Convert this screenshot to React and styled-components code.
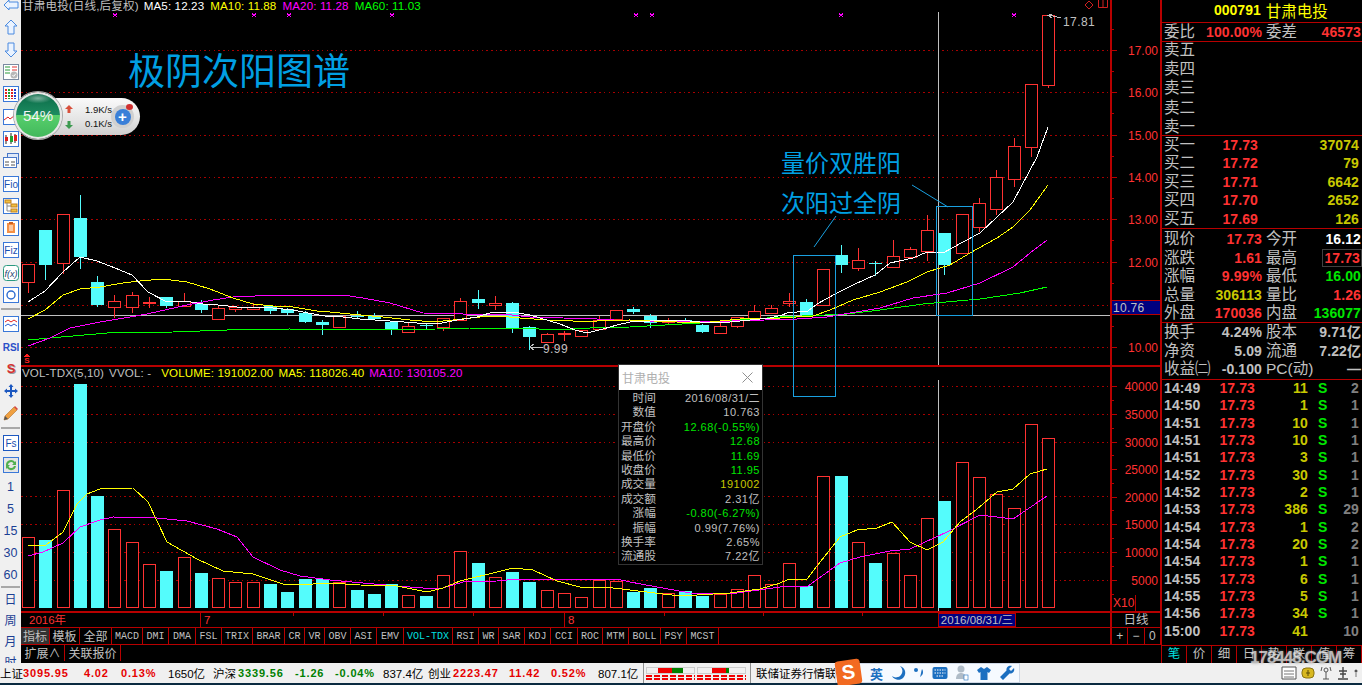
import React from "react";
import styled, { createGlobalStyle } from "styled-components";

const RED = "#ff3232";
const CYAN = "#54fcfc";
const LINE = "#b80000";
const GRAY = "#c0c0c0";
const OLIVE = "#c8c800";
const GREEN = "#00e600";
const CJK = '"Liberation Sans", "Noto Sans CJK SC", sans-serif';

//------candles: [cyan?, high, top, bottom, low]
const candles = [
  [0, 264, 264, 282, 293], [1, 230, 230, 265, 280], [0, 214, 214, 263, 274], [1, 195, 218, 257, 269],
  [1, 276, 282, 305, 307], [0, 295, 301, 307, 318], [0, 292, 295, 307, 313], [0, 297, 302, 302, 308],
  [1, 297, 297, 306, 308], [0, 293, 301, 306, 306], [1, 300, 304, 310, 313], [0, 306, 308, 319, 319],
  [0, 307, 307, 309, 312], [0, 303, 307, 309, 309], [1, 306, 306, 311, 314], [1, 308, 309, 313, 315],
  [1, 311, 313, 322, 323], [1, 320, 322, 325, 335], [0, 316, 316, 327, 327], [1, 311, 316, 317, 318],
  [1, 313, 316, 319, 319], [1, 322, 322, 330, 335], [0, 323, 326, 332, 333], [1, 323, 325, 325, 330],
  [0, 318, 318, 327, 331], [0, 298, 301, 320, 320], [1, 290, 299, 303, 309], [0, 296, 303, 305, 310],
  [1, 302, 303, 328, 333], [1, 326, 327, 337, 350], [0, 333, 334, 342, 342], [0, 331, 333, 334, 341],
  [0, 330, 330, 336, 336], [0, 316, 320, 329, 329], [0, 310, 310, 319, 319], [1, 307, 309, 312, 314],
  [1, 314, 316, 323, 328], [0, 318, 320, 322, 325], [1, 318, 320, 322, 324], [1, 324, 325, 332, 333],
  [0, 321, 326, 333, 334], [0, 317, 317, 326, 328], [0, 305, 311, 318, 318], [0, 305, 308, 313, 313],
  [0, 293, 301, 303, 307], [1, 299, 302, 315, 315], [0, 269, 269, 305, 305], [1, 245, 255, 265, 273],
  [0, 248, 260, 268, 271], [1, 261, 263, 263, 276], [0, 240, 256, 267, 267], [0, 247, 249, 257, 257],
  [0, 215, 230, 251, 261], [1, 233, 233, 265, 275], [0, 214, 214, 253, 253], [0, 198, 203, 227, 232],
  [0, 170, 177, 209, 215], [0, 138, 146, 179, 187], [0, 84, 84, 147, 157], [0, 15, 15, 85, 88],
];

// top of each volume bar, the baseline is 608.7
const volumes = [
  538, 541, 491, 385, 497, 530, 543, 565, 572, 558, 574, 579, 583, 583, 585, 593, 580, 580, 583, 591,
  595, 585, 596, 597, 576, 552, 564, 578, 573, 583, 591, 594, 598, 581, 582, 593, 589, 594, 592, 597,
  595, 590, 576, 585, 564, 587, 477, 477, 543, 564, 554, 576, 519, 502, 463, 478, 495, 509, 425, 439,
];

const ma5 = "28,302 45,291 63,272 80,257 97,261 115,268 132,275 148,292 167,302 185,301 203,304 218,305 237,307 253,307 273,308 293,310 308,313 325,316 343,317 360,319 390,321 417,323 437,324 457,320 477,317 493,312 513,312 530,315 540,318 560,324 575,330 587,333 603,329 617,325 630,322 650,321 670,320 690,321 710,323 730,322 750,320 770,318 782,315 787,313 808,311 817,304 837,293 853,285 875,275 890,263 913,258 927,252 943,253 963,242 980,233 997,217 1013,202 1037,157 1048,127";
const ma10 = "28,319 45,310 63,295 80,289 100,287 123,283 140,281 163,279 187,282 210,289 233,298 253,304 273,306 293,307 317,311 330,312 350,314 383,317 410,320 433,322 453,320 480,317 497,316 520,318 547,320 573,321 597,321 630,320 700,323 750,318 780,318 813,316 830,310 853,300 880,292 907,282 927,272 950,265 970,253 997,238 1013,227 1030,210 1048,185";
const ma20 = "28,346 50,338 70,328 100,322 130,317 147,314 187,305 213,300 233,297 277,295 343,295 363,298 390,303 423,313 463,314 503,314 530,317 563,318 597,319 630,321 700,322 797,319 827,317 850,313 880,308 913,298 947,293 980,283 1013,267 1030,253 1047,240";
const ma60 = "28,340 50,338 73,336 107,333 173,332 227,330 290,329 297,330 437,329 470,328 520,328 557,330 590,328 630,327 700,323 780,317 847,314 880,310 923,304 980,299 1020,293 1047,287";
const volMa5 = "28,546 37,546 46,546 63,533 77,505 87,495 100,490 133,489 148,503 167,543 197,560 223,572 253,575 283,585 313,585 330,584 360,586 397,587 427,593 443,589 460,582 497,573 513,569 533,571 557,582 580,588 613,589 630,591 680,597 730,594 760,590 780,584 787,581 807,580 817,567 840,538 857,531 877,529 892,523 910,543 927,551 943,543 960,523 977,510 997,493 1013,490 1030,475 1047,470";
const volMa10 = "28,557 43,553 63,544 80,528 100,521 113,518 157,519 187,522 217,530 237,538 253,558 280,571 300,577 330,581 363,584 397,587 423,589 443,589 463,583 497,582 517,580 590,580 617,580 630,583 690,594 730,595 780,588 808,587 840,564 860,558 890,552 910,550 947,533 980,516 1013,520 1047,497";

const priceGrid = [50, 92, 135, 177, 219, 262, 305, 347];
const volGrid = [387, 415, 443, 497, 525, 553, 581];
const priceLabels = [[50, "17.00"], [92, "16.00"], [135, "15.00"], [177, "14.00"], [219, "13.00"], [262, "12.00"], [347, "10.00"]];
const volLabels = [[387, "40000"], [415, "35000"], [443, "30000"], [470, "25000"], [498, "20000"], [525, "15000"], [553, "10000"], [581, "5000"]];
const stars = [115, 254, 289, 392, 636, 652, 841, 1014];

const tabs = [
  ["指标", 29, 1], ["模板", 30], ["全部", 32], ["MACD", 31], ["DMI", 26], ["DMA", 27], ["FSL", 26], ["TRIX", 31], ["BRAR", 32],
  ["CR", 20], ["VR", 20], ["OBV", 26], ["ASI", 26], ["EMV", 27], ["VOL-TDX", 49, 2], ["RSI", 26], ["WR", 20], ["SAR", 26],
  ["KDJ", 26], ["CCI", 27], ["ROC", 25], ["MTM", 26], ["BOLL", 32], ["PSY", 26], ["MCST", 32],
];

const asks = ["卖五", "卖四", "卖三", "卖二", "卖一"];
const bids = [
  ["买一", "17.73", "37074"], ["买二", "17.72", "79"], ["买三", "17.71", "6642"], ["买四", "17.70", "2652"], ["买五", "17.69", "126"],
];
const quote = [
  ["现价", "17.73", RED, "今开", "16.12", "#fff"],
  ["涨跌", "1.61", RED, "最高", "17.73", RED, true],
  ["涨幅", "9.99%", RED, "最低", "16.00", GREEN],
  ["总量", "306113", OLIVE, "量比", "1.26", RED],
  ["外盘", "170036", RED, "内盘", "136077", GREEN],
];
const finance = [
  ["换手", "4.24%", "股本", "9.71亿"],
  ["净资", "5.09", "流通", "7.22亿"],
  ["收益㈡", "-0.100", "PC(动)", "—"],
];
const ticks = [
  ["14:49", "11", "2"], ["14:50", "1", "1"], ["14:51", "10", "1"], ["14:51", "10", "1"], ["14:51", "3", "1"],
  ["14:52", "30", "1"], ["14:52", "2", "1"], ["14:53", "386", "29"], ["14:54", "1", "2"], ["14:54", "20", "2"],
  ["14:54", "1", "1"], ["14:55", "6", "1"], ["14:55", "5", "1"], ["14:56", "34", "1"], ["15:00", "41", "10", true],
];
const popupRows = [
  ["时间", "2016/08/31/二", GRAY], ["数值", "10.763", GRAY], ["开盘价", "12.68(-0.55%)", GREEN], ["最高价", "12.68", GREEN],
  ["最低价", "11.69", GREEN], ["收盘价", "11.95", GREEN], ["成交量", "191002", OLIVE], ["成交额", "2.31亿", GRAY],
  ["涨幅", "-0.80(-6.27%)", GREEN], ["振幅", "0.99(7.76%)", GRAY], ["换手率", "2.65%", GRAY], ["流通股", "7.22亿", GRAY],
];
const market = [
  ["上证", "#000", 23, 0], ["3095.95", "#e60000", 61, 1], ["4.02", "#e60000", 37, 1], ["0.13%", "#e60000", 47, 1], ["1650亿", "#000", 45, 0],
  ["沪深", "#000", 25, 0], ["3339.56", "#008000", 57, 1], ["-1.26", "#008000", 40, 1], ["-0.04%", "#008000", 48, 1], ["837.4亿", "#000", 45, 0],
  ["创业", "#000", 25, 0], ["2223.47", "#e60000", 56, 1], ["11.42", "#e60000", 42, 1], ["0.52%", "#e60000", 47, 1], ["807.1亿", "#000", 45, 0],
];
const sideTabs = ["笔", "价", "细", "日", "势", "联", "值", "筹"];

const GlobalStyle = createGlobalStyle`
  html, body { margin: 0; padding: 0; background: #000; }
  * { box-sizing: border-box; }
`;

const Screen = styled.div`
  position: relative;
  width: 1362px;
  height: 685px;
  overflow: hidden;
  background: #000;
  font-family: ${CJK};
  display: flex;
  flex-direction: column;
`;
const Main = styled.div`
  display: flex;
  height: 663px;
`;

//----------left toolbar----------
const ToolBar = styled.div`
  width: 21px;
  height: 663px;
  overflow: hidden;
  background: #f0f0f0;
  display: flex;
  flex-direction: column;
  align-items: center;
`;
const Tool = styled.div`
  flex: none;
  width: 21px;
  height: ${(p) => p.$h || 22.3}px;
  margin-top: ${(p) => p.$mt || 0}px;
  display: flex;
  align-items: center;
  justify-content: center;
  color: #1b3f94;
  font-size: ${(p) => p.$fs || 12.5}px;
`;
const ToolSep = styled.div`
  flex: none;
  width: 19px;
  height: 2px;
  margin: ${(p) => p.$m || "2px 0 3px"};
  background: #a8a8a8;
`;

const IconSvg = ({ children }) => (
  <svg width="16" height="16" viewBox="0 0 16 16">{children}</svg>
);
const Frame = ({ stroke = "#3a78d8", fill = "#fff" }) => (
  <rect x="0.5" y="0.5" width="15" height="15" fill={fill} stroke={stroke} />
);
const Label = ({ t, size = 9, x = 8, y = 12, weight = 400, color = "#1a4fb0", italic }) => (
  <text x={x} y={y} textAnchor="middle" fontSize={size} fontWeight={weight} fill={color} fontFamily="Liberation Sans, sans-serif" fontStyle={italic ? "italic" : "normal"}>
    {t}
  </text>
);

const icons = {
  back: <path d="M1 8 6 3v2h9v6H6v2z" fill="#eaf3ff" stroke="#4a8ae0" />,
  up: <path d="M8 1 14 7h-3v8H5V7H2z" fill="#eaf3ff" stroke="#4a8ae0" />,
  down: <path d="M8 15 2 9h3V1h6v8h3z" fill="#eaf3ff" stroke="#4a8ae0" />,
  report: (
    <>
      <Frame stroke="#7a8aa0" />
      <path d="M2 3h5M2 6h5M2 9h5" stroke="#2a9a3a" />
      <path d="M9 3h5M9 6h5" stroke="#e03030" />
      <circle cx="11" cy="11" r="3.5" fill="#b8b8b8" />
      <path d="m9.5 11 1.2 1.4 2-2.6" stroke="#fff" fill="none" />
    </>
  ),
  grid: (
    <>
      <Frame />
      <path d="M3 3v10M9 3v10" stroke="#e02020" strokeWidth="2" strokeDasharray="2 1" />
      <path d="M6 3v10" stroke="#20a030" strokeWidth="2" strokeDasharray="2 1" />
      <path d="M12 3v10" stroke="#2040d0" strokeWidth="2" strokeDasharray="2 1" />
    </>
  ),
  line: (
    <>
      <Frame />
      <path d="m1 11 4-3 2 2 4-3 4-2" stroke="#e02020" fill="none" />
    </>
  ),
  candle: (
    <>
      <Frame />
      <path d="M3 4v9M8 2v11M12 3v9" stroke="#222" />
      <rect x="2" y="6" width="3" height="4" fill="#e02020" />
      <rect x="7" y="5" width="3" height="6" fill="#20a030" />
      <rect x="11" y="4" width="3" height="6" fill="#e02020" />
    </>
  ),
  windows: (
    <>
      <rect x="4.5" y="0.5" width="11" height="10" fill="#dfe9f8" stroke="#4a78c8" />
      <rect x="0.5" y="4.5" width="13" height="10" fill="#fff" stroke="#4a78c8" />
      <path d="M2 9h4M8 9h4M2 12h4M8 12h4" stroke="#555" />
    </>
  ),
  fio: (
    <>
      <Frame />
      <Label t="Fio" size={10} />
    </>
  ),
  tree: (
    <>
      <Frame />
      <rect x="2" y="2" width="6" height="3" fill="#f0c040" stroke="#c08020" />
      <rect x="8" y="6" width="6" height="3" fill="#f0c040" stroke="#c08020" />
      <rect x="8" y="11" width="6" height="3" fill="#f0c040" stroke="#c08020" />
      <path d="M4 5v8h4M4 8h4" stroke="#888" fill="none" />
    </>
  ),
  note: (
    <>
      <Frame />
      <rect x="4" y="3" width="8" height="10" fill="#f59045" />
      <path d="M6 6h4M6 8h4M6 10h4" stroke="#fff" />
      <rect x="6" y="2" width="4" height="2" fill="#d06020" />
    </>
  ),
  fiz: (
    <>
      <Frame />
      <Label t="Fiz" size={10} />
    </>
  ),
  fx: (
    <>
      <rect x="0.5" y="0.5" width="15" height="15" rx="3" fill="#fff" stroke="#2a9a80" />
      <Label t="f(x)" size={9} y={11.5} color="#1a3f70" italic />
    </>
  ),
  ring: (
    <>
      <Frame />
      <circle cx="8" cy="8" r="4" fill="none" stroke="#2a6ad0" strokeWidth="1.4" />
    </>
  ),
  wave: (
    <>
      <Frame />
      <path d="m2 6 3-2 3 2 3-2 3 2" stroke="#e02020" fill="none" />
      <path d="m2 10 3-2 3 2 3-2 3 2" stroke="#2a5ad0" fill="none" />
    </>
  ),
  rsi: <Label t="RSI" size={10} weight={700} color="#2a4fc8" />,
  sar: (
    <>
      <Label t="S" size={13} x={9} y={13} weight={700} color="#999" />
      <Label t="S" size={13} x={8} y={12} weight={700} color="#d83030" />
    </>
  ),
  move: (
    <path d="M8 1 10.5 4H9v3h3V5.5L15 8l-3 2.5V9H9v3h1.5L8 15l-2.5-3H7V9H4v1.5L1 8l3-2.5V7h3V4H5.5z" fill="#1c58c0" />
  ),
  pencil: (
    <>
      <path d="M2 11 11 2l3 3-9 9-4 1z" fill="#f0a040" stroke="#b07030" strokeWidth="0.6" />
      <path d="m11 2 3 3 1-1-3-3z" fill="#d84040" />
      <path d="m1 15 1-4 3 3z" fill="#555" />
    </>
  ),
  fs: (
    <>
      <Frame stroke="#1c58c0" />
      <Label t="Fs" size={10} />
    </>
  ),
  refresh: (
    <>
      <Frame fill="#e6e6e6" />
      <path d="M3 8a5 5 0 0 1 9-3l1-1v4H9l1.5-1.5A3 3 0 0 0 5 8zM13 9a5 5 0 0 1-9 2l-1 1V8h4L5.5 9.5A3 3 0 0 0 11 9z" fill="#50b050" />
    </>
  ),
};
const firstTools = ["back", "up", "down", "report", "grid", "line", "candle", "windows", "fio", "tree", "note", "fiz", "fx", "ring"];
const secondTools = ["wave", "rsi", "sar", "move", "pencil"];
const thirdTools = ["fs", "refresh"];
const cycles = ["1", "5", "15", "30", "60"];
const periods = ["日", "周", "月", "时"];

function SideTools() {
  return (
    <ToolBar>
      {firstTools.map((k, i) => (
        <Tool key={k} $mt={i === 0 ? -6 : 0}><IconSvg>{icons[k]}</IconSvg></Tool>
      ))}
      <ToolSep />
      {secondTools.map((k) => (
        <Tool key={k}><IconSvg>{icons[k]}</IconSvg></Tool>
      ))}
      <ToolSep />
      {thirdTools.map((k) => (
        <Tool key={k}><IconSvg>{icons[k]}</IconSvg></Tool>
      ))}
      {cycles.map((k) => (
        <Tool key={k} $h={22}>{k}</Tool>
      ))}
      <ToolSep $m="0" />
      {periods.map((k) => (
        <Tool key={k} $h={21} $fs={12}>{k}</Tool>
      ))}
    </ToolBar>
  );
}

//----------chart column----------
const Center = styled.div`
  width: 1140px;
  display: flex;
  flex-direction: column;
`;
const Pane = styled.div`
  display: flex;
  height: ${(p) => p.$h}px;
  border-bottom: 2px solid ${LINE};
`;
const PlotCol = styled.div`
  width: 1089px;
  display: flex;
  flex-direction: column;
  svg { display: block; }
`;
const AxisCol = styled.div`
  width: 51px;
  svg { display: block; }
`;
const LegendRow = styled.div`
  flex: none;
  height: ${(p) => p.$h}px;
  padding-left: 1px;
  display: flex;
  align-items: center;
  gap: ${(p) => p.$gap}px;
  white-space: nowrap;
  font-size: ${(p) => p.$fs}px;
  line-height: 12px;
  letter-spacing: 0.12px;
`;
const LegendItem = styled.span`
  color: ${(p) => p.$c};
  margin-right: ${(p) => p.$mr || 0}px;
`;

const Dotted = ({ y }) => (
  <line x1="21" x2="1110" y1={y} y2={y} stroke="#a80000" strokeDasharray="1.5 3.2" />
);

const cx = (n) => Math.round(22 + 17.29 * n);

function Candle({ n, data }) {
  const [cyan, hi, top, bottom, low] = data;
  const x = cx(n);
  const color = cyan ? CYAN : RED;
  const mid = x + 6.5;
  return (
    <g>
      <line x1={mid} x2={mid} y1={hi} y2={low} stroke={color} />
      {cyan ? (
        <rect x={x} y={top} width="13" height={Math.max(bottom - top, 1)} fill={color} />
      ) : (
        <rect x={x + 0.5} y={top + 0.5} width="12" height={Math.max(bottom - top, 1)} fill="#000" stroke={color} />
      )}
      {top === bottom && <line x1={x} x2={x + 13} y1={top} y2={top} stroke={color} />}
    </g>
  );
}

const MaLine = ({ points, color }) => (
  <polyline points={points} fill="none" stroke={color} strokeWidth="1" />
);

function PriceChart() {
  return (
    <svg width="1089" height="353" viewBox="21 12 1089 353" shapeRendering="crispEdges">
      {priceGrid.map((y) => <Dotted key={y} y={y} />)}
      <line x1="21" x2="1110" y1="315.5" y2="315.5" stroke={GRAY} />
      <line x1="938.5" x2="938.5" y1="11" y2="366" stroke={GRAY} />
      {candles.map((c, i) => <Candle key={i} n={i} data={c} />)}
      <MaLine points={ma60} color="#00ff00" />
      <MaLine points={ma20} color="#ff00ff" />
      <MaLine points={ma10} color="#ffff00" />
      <MaLine points={ma5} color="#ffffff" />
      {stars.map((x) => (
        <path key={x} d={`M${x - 2} 13.5l4 3.5m0 -3.5l-4 3.5`} stroke="#ff00ff" />
      ))}
      <polyline points="1049,15 1061,18" stroke={GRAY} fill="none" />
      <polyline points="1052,14 1048,15.5 1052,18" stroke={GRAY} fill="none" />
      <text x="1063" y="26" fontSize="12" letterSpacing="0.4" fill={GRAY} fontFamily="Liberation Sans">17.81</text>
      <polyline points="531,347 543,347" stroke={GRAY} fill="none" />
      <polyline points="534,344 530,347 534,350" stroke={GRAY} fill="none" />
      <text x="543" y="353" fontSize="12" letterSpacing="0.4" fill={GRAY} fontFamily="Liberation Sans">9.99</text>
      <polygon points="27,353 24,357 30,357" fill="#ff2020" />
      <text x="27" y="363" fontSize="8" fontWeight="700" textAnchor="middle" fill="#ff2020" fontFamily="Liberation Sans">S</text>
    </svg>
  );
}

function VolumeChart() {
  return (
    <svg width="1089" height="232" viewBox="21 380 1089 232" shapeRendering="crispEdges">
      {volGrid.map((y) => <Dotted key={y} y={y} />)}
      <line x1="938.5" x2="938.5" y1="381" y2="612" stroke={GRAY} />
      {volumes.map((top, i) => {
        const x = cx(i);
        return candles[i][0] ? (
          <rect key={i} x={x} y={top} width="13" height={609 - top} fill={CYAN} />
        ) : (
          <rect key={i} x={x + 0.5} y={top + 0.5} width="12" height={608 - top} fill="#000" stroke={RED} />
        );
      })}
      <MaLine points={volMa10} color="#ff00ff" />
      <MaLine points={volMa5} color="#ffff00" />
    </svg>
  );
}

// axis sits in page pixels minus the column offset
function Axis({ height, from, labels, minors, children }) {
  return (
    <svg width="51" height={height} viewBox={`1110 ${from} 51 ${height}`} shapeRendering="crispEdges">
      <rect x="1110" y={from} width="2" height={height} fill={LINE} />
      <rect x="1160" y={from} width="1" height={height} fill={LINE} />
      {labels.map(([y]) => (
        <line key={y} x1="1110" x2="1117" y1={y + 0.5} y2={y + 0.5} stroke={LINE} />
      ))}
      {minors.map((y) => (
        <line key={y} x1="1110" x2="1114" y1={y + 0.5} y2={y + 0.5} stroke={LINE} />
      ))}
      {labels.map(([y, t]) => (
        <text key={t} x="1158" y={y + 4.5} textAnchor="end" fontSize="12" fill={RED} fontFamily="Liberation Sans">{t}</text>
      ))}
      {children}
    </svg>
  );
}

function PriceAxis() {
  return (
    <Axis
      height={365}
      from={0}
      labels={priceLabels}
      minors={[29, 71, 113, 156, 198, 240, 283, 305, 326]}
    >
      <rect x="1112" y="300" width="48" height="15" fill="#000080" />
      <line x1="1112" x2="1160" y1="300" y2="300" stroke={LINE} />
      <line x1="1112" x2="1160" y1="314.5" y2="314.5" stroke={LINE} />
      <text x="1113" y="312" fontSize="12" letterSpacing="0.3" fill={GRAY} fontFamily="Liberation Sans">10.76</text>
    </Axis>
  );
}

const DateBar = styled.div`
  height: 15px;
  display: flex;
  border-bottom: 1px solid ${LINE};
  font-size: 11.5px;
  line-height: 14px;
  color: ${RED};
`;
const DateCell = styled.div`
  position: relative;
  flex: none;
  width: ${(p) => p.$w}px;
  padding-left: ${(p) => p.$pl || 3}px;
  border-left: 1px solid ${(p) => (p.$first ? "transparent" : LINE)};
`;
const DateTick = styled.i`
  position: absolute;
  top: 0;
  left: ${(p) => p.$x}px;
  width: 1px;
  height: 3px;
  background: ${LINE};
`;
const DateNow = styled.div`
  flex: none;
  width: 78px;
  border: 1px solid ${LINE};
  background: #000080;
  color: ${GRAY};
  font-size: 11.5px;
  line-height: 13px;
  text-align: center;
  white-space: nowrap;
`;
const CornerCell = styled.div`
  flex: none;
  width: 51px;
  margin-left: auto;
  border-left: 2px solid ${LINE};
  border-right: 1px solid ${LINE};
  text-align: center;
  color: ${GRAY};
  font-size: 12.5px;
`;
const TabRow = styled.div`
  height: 17px;
  display: flex;
  border-bottom: 1px solid ${LINE};
`;
const Tab = styled.div`
  flex: none;
  width: ${(p) => p.$w}px;
  border-right: 1px solid ${LINE};
  display: flex;
  align-items: center;
  justify-content: center;
  white-space: nowrap;
  font-family: "Liberation Mono", "Noto Sans CJK SC", monospace;
  font-size: ${(p) => (p.$cjk ? 12 : 10)}px;
  color: ${(p) => (p.$on === 2 ? "#00e0e0" : GRAY)};
  background: ${(p) => (p.$on === 1 ? "#333" : "transparent")};
`;
const MiniKey = styled.div`
  flex: 1;
  display: flex;
  align-items: center;
  justify-content: center;
  border-right: 1px solid ${LINE};
  color: ${GRAY};
  font-size: 12px;
`;
const MiniKeys = styled.div`
  flex: none;
  width: 51px;
  margin-left: auto;
  display: flex;
  border-left: 2px solid ${LINE};
`;
const SubRow = styled.div`
  height: 16px;
  display: flex;
`;

//----------right panel----------
const Panel = styled.div`
  width: 201px;
  display: flex;
  flex-direction: column;
  border-left: 1px solid ${LINE};
`;
const PanelBlock = styled.div`
  flex: none;
  height: ${(p) => p.$h}px;
  padding: ${(p) => p.$pt || 0}px 2px 0 2px;
  border-bottom: 1px solid ${LINE};
`;
const Title = styled.div`
  height: 20px;
  display: flex;
  align-items: center;
  padding-left: 50px;
  gap: 5px;
  color: #ffff00;
`;
const TitleCode = styled.span`
  font-size: 14px;
  font-weight: 700;
`;
const TitleName = styled.span`
  font-size: 15.5px;
`;
const Row = styled.div`
  display: grid;
  grid-template-columns: 98px 95px;
  column-gap: 4px;
  height: 18.5px;
  line-height: 18.5px;
`;
const AskList = styled.div`
  margin-top: -2px;
`;
const AskRow = styled.div`
  height: 19.2px;
  line-height: 19.2px;
`;
const Cell = styled.div`
  display: flex;
  justify-content: space-between;
  white-space: nowrap;
`;
const Cap = styled.span`
  color: ${GRAY};
  font-size: 15.5px;
`;
const Num = styled.span`
  position: relative;
  color: ${(p) => p.$c || GRAY};
  font-size: 14px;
  font-weight: 700;
  letter-spacing: 0.1px;
`;
const Boxed = styled.span`
  outline: 1px solid #404040;
  outline-offset: 0;
  padding: 0 1px;
`;
const BidRow = styled.div`
  display: grid;
  grid-template-columns: 40px 54px 1fr;
  height: 18.4px;
  line-height: 18.4px;
  padding-right: 1px;
  white-space: nowrap;
  & > :not(:first-child) { text-align: right; }
`;
const TickRow = styled.div`
  display: grid;
  grid-template-columns: 36px 55px 53px 20px 1fr;
  height: 17.33px;
  line-height: 17.33px;
  padding-right: 1px;
  white-space: nowrap;
  & > :nth-child(2), & > :nth-child(3), & > :last-child { text-align: right; }
  & > :nth-child(4) { padding-left: 10px; }
`;
const SideTabs = styled.div`
  height: 17px;
  display: flex;
`;
const SideTab = styled.div`
  flex: none;
  width: 25px;
  border-right: 1px solid ${LINE};
  text-align: center;
  line-height: 16px;
  font-size: 12.5px;
  color: ${(p) => (p.$on ? "#00e0e0" : GRAY)};
`;
const Watermark = styled.div`
  position: absolute;
  left: 1250px;
  top: 648px;
  color: #e8e8e8;
  font-family: "Liberation Sans", sans-serif;
  font-size: 17px;
  font-weight: 700;
  letter-spacing: -1px;
  text-shadow: 0 0 3px #888;
  opacity: 0.8;
`;

//----------status bar----------
const StatusBar = styled.div`
  flex: none;
  height: 20px;
  background: #f0f0f0;
  display: flex;
  align-items: center;
  font-size: 11.5px;
  white-space: nowrap;
`;
const Stat = styled.span`
  flex: none;
  width: ${(p) => p.$w}px;
  color: ${(p) => p.$c};
  font-weight: ${(p) => (p.$bold ? 700 : 400)};
  letter-spacing: ${(p) => (p.$bold ? 0.85 : 0)}px;
  font-size: ${(p) => (p.$bold ? 11 : 11.5)}px;
`;
const VDivider = styled.i`
  flex: none;
  width: 1px;
  height: 20px;
  background: #909090;
  margin: ${(p) => p.$m};
`;
const Breadth = styled.div`
  flex: none;
  width: 49px;
  margin-right: 2px;
  display: flex;
  flex-direction: column;
  gap: 1px;
`;
const BreadthTop = styled.div`
  display: flex;
  height: 7px;
  border: 1px solid #ccc;
`;
const BreadthCell = styled.i`
  flex: ${(p) => p.$f || 1};
  background: ${(p) => p.$c || "transparent"};
`;
const Dashes = styled.div`
  height: 2px;
  background: repeating-linear-gradient(90deg, #f00000 0 6px, transparent 6px 8px);
`;
const TrayIcons = styled.div`
  margin-left: auto;
  padding-right: 3px;
  display: flex;
  align-items: center;
  gap: 4px;
`;
const BottomStrip = styled.div`
  flex: none;
  height: 2px;
  background: #0a2a40;
`;

//----------things lying over the chart----------
const Headline = styled.div`
  position: absolute;
  left: ${(p) => p.$x}px;
  top: ${(p) => p.$y}px;
  font-family: "Noto Sans CJK SC", sans-serif;
  font-size: ${(p) => p.$fs}px;
  line-height: 1;
  color: #009fe3;
  white-space: nowrap;
`;
const Notes = styled.svg`
  position: absolute;
  left: 0;
  top: 0;
  pointer-events: none;
`;
const Corner = styled.svg`
  position: absolute;
  left: 1082px;
  top: 0;
`;

const Speed = styled.div`
  position: absolute;
  left: 38px;
  top: 98px;
  width: 102px;
  height: 37px;
  border-radius: 0 19px 19px 0;
  background: linear-gradient(#fafafa, #e4e4e4 60%, #cfcfcf);
  display: flex;
  align-items: center;
  padding-left: 27px;
`;
const SpeedBall = styled.div`
  position: absolute;
  left: 14px;
  top: 92px;
  width: 48px;
  height: 47px;
  border-radius: 50%;
  border: 2px solid #e8e8e8;
  box-shadow: 0 0 0 1px #aaa;
  background:
    radial-gradient(ellipse 14px 5px at 50% 10%, rgba(255, 255, 255, 0.45), transparent),
    linear-gradient(#0b6a48 0%, #1d8c60 48%, #58d06c 48%, #42b85c 100%);
  color: #f4f4f4;
  font-size: 15px;
  text-align: center;
  line-height: 44px;
`;
const SpeedRates = styled.div`
  margin-left: 12px;
  font-size: 9.5px;
  line-height: 14px;
  color: #111;
`;
const SpeedArrows = styled.svg`
  flex: none;
`;
const PlusBall = styled.div`
  position: absolute;
  right: 6px;
  top: 7px;
  width: 23px;
  height: 23px;
  border-radius: 50%;
  background: #d0d0d0;
  display: flex;
  align-items: center;
  justify-content: center;
  &::before {
    content: "+";
    width: 16px;
    height: 16px;
    border-radius: 50%;
    background: #3a7fd8;
    color: #fff;
    font-size: 15px;
    font-weight: 700;
    line-height: 15px;
    text-align: center;
  }
  &::after {
    content: "";
    position: absolute;
    right: 1px;
    top: -1px;
    width: 7px;
    height: 6px;
    border-radius: 50%;
    background: #d03030;
  }
`;

const Popup = styled.div`
  position: absolute;
  left: 618px;
  top: 364px;
  width: 145px;
  height: 201px;
  border: 1px solid #333;
  background: #000;
`;
const PopupHead = styled.div`
  height: 25px;
  background: #fff;
  color: #b0b0b0;
  font-size: 12px;
  padding: 0 9px 0 3px;
  display: flex;
  align-items: center;
  justify-content: space-between;
  svg { flex: none; }
`;
const PopupBody = styled.div`
  padding-top: 1px;
`;
const PopupRow = styled.div`
  display: grid;
  grid-template-columns: 37px 104px;
  height: 14.4px;
  line-height: 14.4px;
  white-space: nowrap;
  text-align: right;
  font-size: 11px;
  letter-spacing: 0.5px;
  color: ${(p) => p.$c};
  & > :first-child { color: ${GRAY}; font-size: 11.7px; letter-spacing: 0; }
`;

const ImeBar = styled.div`
  position: absolute;
  left: 835px;
  top: 663px;
  width: 185px;
  height: 20px;
  background: #f6faff;
  border: 1px solid #cfd8e6;
  display: flex;
  align-items: center;
  padding-left: 34px;
  gap: 7px;
  color: #1c6fc0;
  font-size: 13px;
  font-weight: 700;
  svg { flex: none; }
`;
const ImeLogo = styled.div`
  position: absolute;
  left: 0;
  top: -4px;
  width: 25px;
  height: 25px;
  border-radius: 3px;
  background: #f26a21;
  color: #fff;
  font-size: 20px;
  font-weight: 700;
  line-height: 25px;
  text-align: center;
  transform: rotate(-8deg);
`;

function App() {
  return (
    <Screen>
      <GlobalStyle />
      <Main>
        <SideTools />
        <Center>
          <Pane $h={367}>
            <PlotCol>
              <LegendRow $h={12} $fs={11.6} $gap={6}>
                <LegendItem $c={GRAY} $mr={-1}>甘肃电投(日线,后复权)</LegendItem>
                <LegendItem $c="#fff">MA5: 12.23</LegendItem>
                <LegendItem $c="#ffff00">MA10: 11.88</LegendItem>
                <LegendItem $c="#ff00ff">MA20: 11.28</LegendItem>
                <LegendItem $c="#00ff00">MA60: 11.03</LegendItem>
              </LegendRow>
              <PriceChart />
            </PlotCol>
            <AxisCol><PriceAxis /></AxisCol>
          </Pane>
          <Pane $h={246}>
            <PlotCol>
              <LegendRow $h={12} $fs={11.6} $gap={5}>
                <LegendItem $c={GRAY}>VOL-TDX(5,10)</LegendItem>
                <LegendItem $c={GRAY} $mr={5}>VVOL: -</LegendItem>
                <LegendItem $c="#ffff00">VOLUME: 191002.00</LegendItem>
                <LegendItem $c="#ffff00">MA5: 118026.40</LegendItem>
                <LegendItem $c="#ff00ff">MA10: 130105.20</LegendItem>
              </LegendRow>
              <VolumeChart />
            </PlotCol>
            <AxisCol>
              <Axis height={244} from={368} labels={volLabels} minors={[401, 429, 456, 484, 511, 539, 567, 595]}>
                <text x="1113" y="608" fontSize="12" fill={RED} fontFamily="Liberation Sans">X10</text>
                <line x1="1135.5" x2="1135.5" y1="596" y2="612" stroke={LINE} />
              </Axis>
            </AxisCol>
          </Pane>
          <DateBar>
            <DateCell $w={179} $pl={7} $first>2016年</DateCell>
            <DateCell $w={364}>7<DateTick $x={92} /><DateTick $x={182} /><DateTick $x={272} /></DateCell>
            <DateCell $w={374}>8<DateTick $x={99} /><DateTick $x={198} /><DateTick $x={297} /></DateCell>
            <DateNow>2016/08/31/三</DateNow>
            <CornerCell>日线</CornerCell>
          </DateBar>
          <TabRow>
            {tabs.map(([t, w, on]) => (
              <Tab key={t} $w={w} $on={on} $cjk={/[^A-Z-]/.test(t)}>{t}</Tab>
            ))}
            <MiniKeys>
              <MiniKey>+</MiniKey>
              <MiniKey>−</MiniKey>
              <MiniKey>0</MiniKey>
            </MiniKeys>
          </TabRow>
          <SubRow>
            <Tab $w={44} $cjk>扩展∧</Tab>
            <Tab $w={56} $cjk>关联报价</Tab>
          </SubRow>
        </Center>
        <Panel>
          <PanelBlock $h={23}>
            <Title>
              <TitleCode>000791</TitleCode>
              <TitleName>甘肃电投</TitleName>
            </Title>
          </PanelBlock>
          <PanelBlock $h={19}>
            <Row>
              <Cell><Cap>委比</Cap><Num $c={RED}>100.00%</Num></Cell>
              <Cell><Cap>委差</Cap><Num $c={RED}>46573</Num></Cell>
            </Row>
          </PanelBlock>
          <PanelBlock $h={94}>
            <AskList>
              {asks.map((a) => <AskRow key={a}><Cap>{a}</Cap></AskRow>)}
            </AskList>
          </PanelBlock>
          <PanelBlock $h={93}>
            {bids.map(([a, p, v]) => (
              <BidRow key={a}><Cap>{a}</Cap><Num $c={RED}>{p}</Num><Num $c={OLIVE}>{v}</Num></BidRow>
            ))}
          </PanelBlock>
          <PanelBlock $h={94} $pt={1}>
            {quote.map(([a, av, ac, b, bv, bc, boxed]) => (
              <Row key={a}>
                <Cell><Cap>{a}</Cap><Num $c={ac}>{av}</Num></Cell>
                <Cell><Cap>{b}</Cap><Num $c={bc}>{boxed ? <Boxed>{bv}</Boxed> : bv}</Num></Cell>
              </Row>
            ))}
          </PanelBlock>
          <PanelBlock $h={57}>
            {finance.map(([a, av, b, bv]) => (
              <Row key={a}>
                <Cell><Cap>{a}</Cap><Num>{av}</Num></Cell>
                <Cell><Cap>{b}</Cap><Num>{bv}</Num></Cell>
              </Row>
            ))}
          </PanelBlock>
          <PanelBlock $h={266}>
            {ticks.map(([t, v, c, noSide], i) => (
              <TickRow key={i}>
                <Num>{t}</Num>
                <Num $c={RED}>17.73</Num>
                <Num $c={OLIVE}>{v}</Num>
                <Num $c={GREEN}>{noSide ? "" : "S"}</Num>
                <Num $c="#808080">{c}</Num>
              </TickRow>
            ))}
          </PanelBlock>
          <SideTabs>
            {sideTabs.map((t, i) => <SideTab key={t} $on={i === 0}>{t}</SideTab>)}
          </SideTabs>
        </Panel>
      </Main>

      <StatusBar>
        {market.map(([t, c, w, bold]) => (
          <Stat key={t} $c={c} $w={w} $bold={bold}>{t}</Stat>
        ))}
        <VDivider $m="0 2px 0 0" />
        <Breadth>
          <BreadthTop><BreadthCell $f={1} /><BreadthCell $f={1.2} $c="#f00000" /><BreadthCell $f={1} $c="#008000" /><BreadthCell $f={1} /></BreadthTop>
          <Dashes /><Dashes />
        </Breadth>
        <Breadth>
          <BreadthTop><BreadthCell $f={1.2} /><BreadthCell $f={1.2} $c="#f00000" /><BreadthCell $f={0.2} $c="#008000" /><BreadthCell $f={1.4} /></BreadthTop>
          <Dashes /><Dashes />
        </Breadth>
        <VDivider $m="0 5px 0 2px" />
        <Stat $c="#000" $w={90}>联储证券行情联</Stat>
        <TrayIcons>
          <svg width="16" height="14" viewBox="0 0 16 14"><path d="M1 1h14v12H1z" fill="#fff" stroke="#555" /><path d="M3 5h10M3 8h10M3 11h10" stroke="#777" /></svg>
          <svg width="14" height="14" viewBox="0 0 14 14"><rect x="1" y="2" width="12" height="10" rx="4" fill="#d8b820" stroke="#8a7410" /><path d="M7 4v6M5 7h4" stroke="#5a4a08" /></svg>
          <svg width="14" height="14" viewBox="0 0 14 14"><circle cx="7" cy="4" r="2" fill="none" stroke="#555" /><path d="M7 6v7M4 13h6M3 1 2 5M11 1l1 4" stroke="#555" fill="none" /></svg>
          <svg width="12" height="14" viewBox="0 0 12 14"><path d="M6 1v11M2 5h8M3 8h6M1 13h10" stroke="#444" strokeWidth="1.4" /></svg>
          <svg width="6" height="14" viewBox="0 0 6 14"><circle cx="3" cy="5" r="1.5" fill="#555" /><path d="M3 7v4" stroke="#777" /></svg>
        </TrayIcons>
      </StatusBar>
      <BottomStrip />

      <Corner width="28" height="10" viewBox="0 0 28 10">
        <path d="M7 1 11 5 7 9 3 5z" fill="none" stroke="#d02020" />
        <path d="M16.5 0v7.5h9V0M21 0v7.5" fill="none" stroke="#d02020" />
      </Corner>

      <Headline $x={128} $y={51} $fs={37}>极阴次阳图谱</Headline>
      <Headline $x={781} $y={150} $fs={24}>量价双胜阳</Headline>
      <Headline $x={781} $y={190} $fs={24}>次阳过全阴</Headline>
      <Notes width="1362" height="685" viewBox="0 0 1362 685" fill="none" stroke="#1aa0e0" shapeRendering="crispEdges">
        <rect x="793.5" y="255.5" width="42" height="141" />
        <rect x="936.5" y="206.5" width="36" height="109" />
        <line x1="814" y1="247" x2="836" y2="216" shapeRendering="auto" />
        <line x1="912" y1="185" x2="948" y2="207" shapeRendering="auto" />
      </Notes>

      <Speed>
        <SpeedArrows width="8" height="24" viewBox="0 0 8 24">
          <path d="M4 0 8 4H5.5v4h-3V4H0z" fill="#d8503c" />
          <path d="M4 24 0 20h2.5v-4h3v4H8z" fill="#3c9a50" />
        </SpeedArrows>
        <SpeedRates>1.9K/s<br />0.1K/s</SpeedRates>
        <PlusBall />
      </Speed>
      <SpeedBall>54%</SpeedBall>

      <Popup>
        <PopupHead>
          甘肃电投
          <svg width="11" height="11" viewBox="0 0 11 11"><path d="M0.5 0.5l10 10M10.5 0.5l-10 10" stroke="#909090" fill="none" /></svg>
        </PopupHead>
        <PopupBody>
          {popupRows.map(([a, v, c]) => (
            <PopupRow key={a} $c={c}><span>{a}</span><span>{v}</span></PopupRow>
          ))}
        </PopupBody>
      </Popup>

      <Watermark>178448.COM</Watermark>

      <ImeBar>
        <ImeLogo>S</ImeLogo>
        英
        <svg width="16" height="16" viewBox="0 0 16 16"><path d="M10 1a7 7 0 1 1-8 10 6 6 0 0 0 8-10z" fill="#1c6fc0" /></svg>
        <svg width="12" height="14" viewBox="0 0 12 14"><circle cx="3" cy="4" r="2" fill="#1c6fc0" /><path d="M9 3c2 3 1 6-2 8 1-3 1-5 2-8z" fill="#1c6fc0" /></svg>
        <svg width="16" height="14" viewBox="0 0 16 14"><rect x="0.5" y="1" width="15" height="12" rx="2" fill="#1c6fc0" /><path d="M2.5 4h11M2.5 7h11M4.5 10h7" stroke="#fff" strokeDasharray="1.5 1" /></svg>
        <svg width="14" height="16" viewBox="0 0 14 16"><circle cx="6" cy="4" r="3.5" fill="#b0bcc8" /><path d="M1 14c0-4 2-6 5-6s5 2 5 6z" fill="#b0bcc8" /><rect x="9" y="10" width="4" height="5" fill="#fff" stroke="#1c6fc0" strokeWidth="0.6" /></svg>
        <svg width="16" height="15" viewBox="0 0 16 15"><path d="M5 1 1 4l2 3 1.5-1v8h7V6L13 7l2-3-4-3-3 2z" fill="#1c6fc0" /></svg>
        <svg width="16" height="16" viewBox="0 0 16 16"><path d="M15 3 12 6 10 4l3-3c-3-1-6 1-5.5 4.5L1 12l3 3 6.5-6.5C14 9 16 6 15 3z" fill="#1c6fc0" /></svg>
      </ImeBar>
    </Screen>
  );
}

export default App;
